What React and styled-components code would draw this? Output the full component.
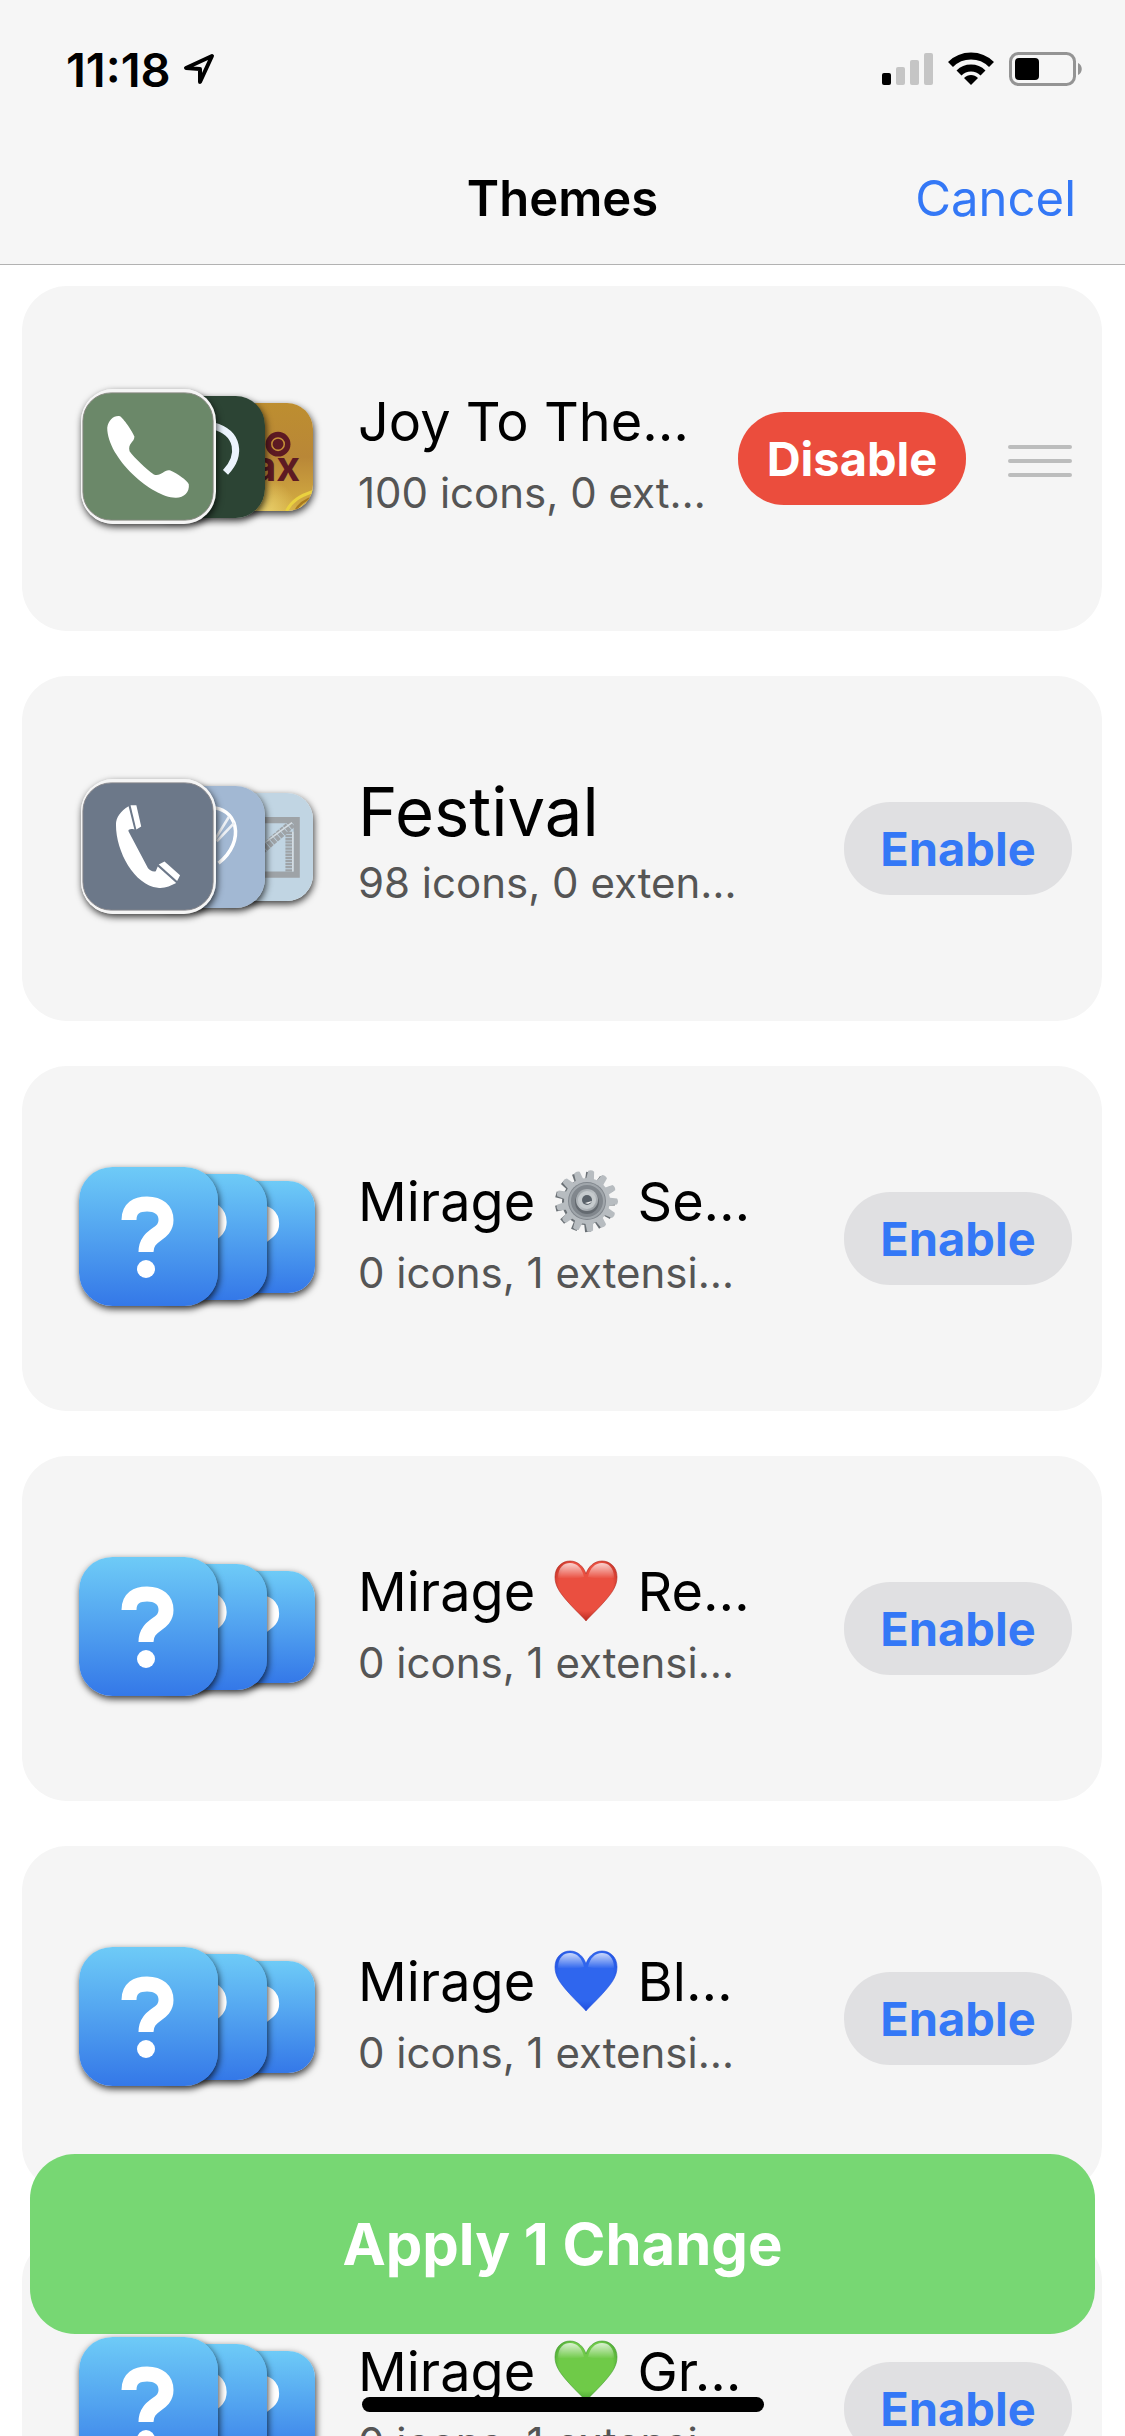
import React from 'react';
import styled, { createGlobalStyle } from 'styled-components';

const GlobalStyle = createGlobalStyle`
  * {
    box-sizing: border-box;
  }
  body {
    margin: 0;
    background-color: #fff;
    color: #000;
    font-family: Inter, 'Liberation Sans', sans-serif;
  }
  button {
    border: none;
    padding: 0;
    font-family: inherit;
    cursor: pointer;
  }
`;

const Screen = styled.div`
  display: flex;
  flex-direction: column;
  height: 100vh;
  overflow: hidden;
`;

const Header = styled.header`
  flex: none;
  background-color: #f6f6f6;
  border-bottom: 1px solid #b2b2b2;
`;

const StatusBar = styled.div`
  display: flex;
  align-items: center;
  justify-content: space-between;
  height: 132px;
  padding: 6px 42px 0 66px;
`;

const StatusGroup = styled.div`
  display: flex;
  align-items: center;
  gap: 12px;
`;

const Clock = styled.span`
  font-size: 47px;
  font-weight: 600;
`;

const NavBar = styled.nav`
  display: grid;
  grid-template-columns: 1fr auto 1fr;
  align-items: center;
  height: 132px;
  padding: 0 49px;
`;

const NavTitle = styled.h1`
  grid-column: 2;
  margin: 0;
  font-size: 49px;
  font-weight: 600;
`;

const CancelButton = styled.button`
  justify-self: end;
  background: none;
  color: #3478f6;
  font-size: 49px;
`;

const ThemeList = styled.ul`
  flex: 1;
  min-height: 0;
  overflow: hidden;
  display: flex;
  flex-direction: column;
  gap: 45px;
  margin: 0;
  padding: 21px 23px 0 22px;
  list-style: none;
`;

const ThemeCard = styled.li`
  flex: none;
  display: flex;
  align-items: center;
  height: 345px;
  padding: 0 30px 0 57px;
  border-radius: 45px;
  background-color: #f5f5f5;
`;

const IconStack = styled.div`
  flex: none;
  display: flex;
  align-items: center;
  width: 279px;
  padding-bottom: 4px;
`;

const AppIcon = styled.svg`
  position: relative;
  flex: none;
  width: ${(props) => props.$size - props.$inset * 2}px;
  height: ${(props) => props.$size - props.$inset * 2}px;
  margin: ${(props) => props.$inset}px;
  margin-right: ${(props) => (props.$overlap || 0) + props.$inset}px;
  z-index: ${(props) => props.$layer};
  border-radius: 24%;
  box-shadow: 1px 3px 7px rgba(0, 0, 0, 0.75);
`;

const ThemeInfo = styled.div`
  flex: 1;
  min-width: 0;
  padding-bottom: 8px;
  white-space: nowrap;
`;

const ThemeName = styled.h2`
  margin: 0;
  font-size: ${(props) => (props.$large ? 67 : 54)}px;
  font-weight: 400;
  line-height: 76px;
`;

const ThemeDetail = styled.p`
  margin: 0;
  color: #555;
  font-size: 42px;
  line-height: 66px;
`;

const Emoji = styled.svg`
  width: 64px;
  height: 64px;
  margin: 0 4px;
  vertical-align: -12px;
`;

const ToggleButton = styled.button`
  flex: none;
  width: 228px;
  height: 93px;
  border-radius: 46px;
  background-color: ${(props) => (props.$active ? '#eb4d3d' : '#e0e0e2')};
  color: ${(props) => (props.$active ? '#fff' : '#3478f6')};
  font-size: 47px;
  font-weight: 700;
`;

const DragHandle = styled.svg`
  flex: none;
  width: 66px;
  height: 34px;
  margin: 4px 0 0 40px;
`;

const Footer = styled.footer`
  position: fixed;
  right: 0;
  bottom: 24px;
  left: 0;
  display: flex;
  flex-direction: column;
  align-items: center;
  gap: 63px;
  padding: 0 30px;
`;

const ApplyButton = styled.button`
  width: 100%;
  height: 180px;
  border-radius: 45px;
  background-color: #77d773;
  color: #fff;
  font-size: 58px;
  font-weight: 700;
`;

const HomeIndicator = styled.div`
  width: 402px;
  height: 15px;
  border-radius: 8px;
  background-color: #000;
`;

const hearts = {
  red: ['#ea4f40', '#b3261c'],
  blue: ['#2f66ee', '#1d4bdc'],
  green: ['#6fca48', '#3f9a2c'],
};

const Heart = ({ color }) => {
  const [base, dark] = hearts[color];
  return (
    <Emoji viewBox="0 0 64 64" role="img" aria-label={`${color} heart`}>
      <defs>
        <radialGradient id={`heart-${color}`} cx="0.5" cy="0.4" r="0.62">
          <stop offset="0" stopColor={base} />
          <stop offset="0.7" stopColor={base} />
          <stop offset="1" stopColor={dark} />
        </radialGradient>
        <linearGradient id={`shine-${color}`} x1="0" y1="0" x2="0" y2="1">
          <stop offset="0" stopColor="#fff" stopOpacity="0.75" />
          <stop offset="1" stopColor="#fff" stopOpacity="0" />
        </linearGradient>
      </defs>
      <path
        d="M32 62C28 57 22 52 14 43C6 34 1 27 1 18C1 8 8 2 16 2C24 2 30 8 32 15C34 8 40 2 48 2C56 2 63 8 63 18C63 27 58 34 50 43C42 52 36 57 32 62Z"
        fill={`url(#heart-${color})`}
        stroke={dark}
        strokeOpacity="0.6"
      />
      <path d="M4 19C4 8 10 4 16 4C23 4 28 9 30 18C22 20 12 20 4 19Z" fill={`url(#shine-${color})`} />
      <path d="M60 19C60 8 54 4 48 4C41 4 36 9 34 18C42 20 52 20 60 19Z" fill={`url(#shine-${color})`} />
    </Emoji>
  );
};

const teeth = Array.from({ length: 13 }, (_, i) => (i * 360) / 13 + 8);

const Gear = () => (
  <Emoji viewBox="0 0 64 64" role="img" aria-label="gear">
    <defs>
      <linearGradient id="gear" x1="0" y1="0" x2="1" y2="1">
        <stop offset="0" stopColor="#9aa0a5" />
        <stop offset="0.5" stopColor="#bcc1c5" />
        <stop offset="1" stopColor="#8d9398" />
      </linearGradient>
    </defs>
    <g fill="#6a7075">
      <circle cx="31" cy="33" r="23" />
      {teeth.map((angle) => (
        <path key={angle} d="M28 12L28 3H34L34 12Z" transform={`rotate(${angle} 31 33)`} />
      ))}
    </g>
    <g fill="#b7bcc0">
      <circle cx="33" cy="32" r="23" />
      {teeth.map((angle) => (
        <path key={angle} d="M29 11L30 2Q33 0 36 2L37 11Z" transform={`rotate(${angle} 33 32)`} />
      ))}
    </g>
    <circle cx="33" cy="32" r="19" fill="#81878d" />
    <circle cx="33" cy="32" r="17" fill="none" stroke="#a0a6ab" strokeWidth="2" />
    <circle cx="33" cy="33" r="12" fill="#646a70" />
    <circle cx="33" cy="31" r="11" fill="url(#gear)" />
    <circle cx="33" cy="31" r="9" fill="#c5cacd" />
    <circle cx="33" cy="31" r="5" fill="#596169" />
    <path d="M31 34A5 5 0 0 0 38 32Z" fill="#f4f4f4" />
  </Emoji>
);

const QuestionArt = () => (
  <>
    <defs>
      <linearGradient id="sky" x1="0" y1="0" x2="0" y2="1">
        <stop offset="0" stopColor="#6ecbf7" />
        <stop offset="1" stopColor="#3478e8" />
      </linearGradient>
    </defs>
    <rect width="139" height="139" fill="url(#sky)" />
    <path
      d="M50 53C50 41 58 37 68 37C80 37 87 43 87 53C87 69 67 66 67 85"
      fill="none"
      stroke="#fff"
      strokeWidth="15"
    />
    <circle cx="67" cy="102" r="9" fill="#fff" />
  </>
);

const GreenPhoneArt = () => (
  <>
    <rect width="139" height="139" fill="#f5f5f5" />
    <rect x="2" y="4" width="134" height="131" rx="29" fill="#6b8869" stroke="#85877f" strokeWidth="1" />
    <path
      d="M27 40C28 32 34 27 40 28C43 29 54 45 55 49C55 55 48 56 50 64C55 71 67 82 75 88C82 91 86 82 92 84C99 87 109 94 111 98C112 106 106 112 98 112C75 113 27 72 27 40Z"
      fill="#fff"
    />
  </>
);

const SlatePhoneArt = () => (
  <>
    <rect width="139" height="139" fill="#f5f5f5" />
    <rect x="2" y="4" width="134" height="131" rx="29" fill="#6c7889" stroke="#85858a" strokeWidth="1" />
    <path
      d="M49 28C41 33 36 39 36 47C36 75 55 109 79 112C86 113 92 110 98 107L79 90L77 95C74 96 71 94 69 92L49 54C48 52 51 51 55 52Z"
      fill="#fff"
    />
    <path d="M51 27L57 27L62 49L57 52Z" fill="#fff" />
    <path d="M80 88L86 85L102 99L99 105Z" fill="#fff" />
  </>
);

const RingArt = () => (
  <>
    <rect width="139" height="139" fill="#2c4434" />
    <path d="M80 34C110 42 112 68 94 87" fill="none" stroke="#ecf4fd" strokeWidth="8" />
  </>
);

const CompassArt = () => (
  <>
    <rect width="139" height="139" fill="#a2b8d3" />
    <path d="M74 25C108 22 118 63 86 88" fill="none" stroke="#fff" strokeWidth="4" />
    <path d="M84 63L104 42M80 64L98 35" fill="none" stroke="#eef1f5" strokeWidth="3" />
  </>
);

const GoldArt = () => (
  <>
    <defs>
      <linearGradient id="gold" x1="0" y1="0" x2="0" y2="1">
        <stop offset="0" stopColor="#bd8e30" />
        <stop offset="0.5" stopColor="#b98737" />
        <stop offset="1" stopColor="#d5af43" />
      </linearGradient>
      <radialGradient id="gold-glow" cx="0.55" cy="1" r="0.3">
        <stop offset="0" stopColor="#e9cf6c" />
        <stop offset="1" stopColor="#e9cf6c" stopOpacity="0" />
      </radialGradient>
    </defs>
    <rect width="139" height="139" fill="url(#gold)" />
    <rect width="139" height="139" fill="url(#gold-glow)" />
    <path d="M105 139C112 125 122 120 139 114" fill="none" stroke="#ead13f" strokeWidth="4" />
    <path d="M116 139C122 128 130 124 139 121" fill="none" stroke="#a8791d" strokeWidth="3" />
    <circle cx="94" cy="53" r="16" fill="#5d1a23" />
    <circle cx="94" cy="53" r="8" fill="none" stroke="#c48f37" strokeWidth="2" />
    <text x="61" y="101" fill="#5d1a23" fontSize="53" fontWeight="700">
      ax
    </text>
  </>
);

const SketchArt = () => (
  <>
    <rect width="139" height="139" fill="#c1d5e3" />
    <g fill="none" stroke="#9ea3a7">
      <path d="M60 35H118V105H60" strokeWidth="8" />
      <path d="M72 74L116 36" strokeWidth="11" strokeDasharray="5 1" />
      <path d="M108 50V102" strokeWidth="9" strokeDasharray="3 1" />
    </g>
    <path d="M74 66L112 38M113 50V101" stroke="#d4dce2" strokeWidth="2" />
  </>
);

const defaultIcons = [QuestionArt, QuestionArt, QuestionArt];

const themes = [
  {
    id: 'joy',
    name: 'Joy To The…',
    detail: '100 icons, 0 ext…',
    icons: [GreenPhoneArt, RingArt, GoldArt],
    inset: 2,
    active: true,
  },
  {
    id: 'festival',
    name: 'Festival',
    detail: '98 icons, 0 exten…',
    icons: [SlatePhoneArt, CompassArt, SketchArt],
    inset: 2,
    large: true,
  },
  { id: 'settings', name: <>Mirage <Gear /> Se…</>, detail: '0 icons, 1 extensi…', icons: defaultIcons },
  { id: 'red', name: <>Mirage <Heart color="red" /> Re…</>, detail: '0 icons, 1 extensi…', icons: defaultIcons },
  { id: 'blue', name: <>Mirage <Heart color="blue" /> Bl…</>, detail: '0 icons, 1 extensi…', icons: defaultIcons },
  { id: 'green', name: <>Mirage <Heart color="green" /> Gr…</>, detail: '0 icons, 1 extensi…', icons: defaultIcons },
];

const ThemeRow = ({ theme }) => {
  const [Front, Middle, Back] = theme.icons;
  const inset = theme.inset || 0;

  return (
    <ThemeCard>
      <IconStack aria-hidden="true">
        <AppIcon viewBox="0 0 139 139" $size={139} $inset={inset} $overlap={-77} $layer={3}>
          <Front />
        </AppIcon>
        <AppIcon viewBox="0 0 139 139" $size={126} $inset={inset} $overlap={-64} $layer={2}>
          <Middle />
        </AppIcon>
        <AppIcon viewBox="0 0 139 139" $size={112} $inset={inset} $layer={1}>
          <Back />
        </AppIcon>
      </IconStack>
      <ThemeInfo>
        <ThemeName $large={theme.large}>{theme.name}</ThemeName>
        <ThemeDetail>{theme.detail}</ThemeDetail>
      </ThemeInfo>
      <ToggleButton type="button" $active={theme.active}>
        {theme.active ? 'Disable' : 'Enable'}
      </ToggleButton>
      {theme.active && (
        <DragHandle viewBox="0 0 66 34" stroke="#bcbdbd" strokeWidth="4" strokeLinecap="round" aria-hidden="true">
          <path d="M4 3H64M4 17H64M4 31H64" />
        </DragHandle>
      )}
    </ThemeCard>
  );
};

const StatusIcons = () => (
  <svg width="201" height="34" viewBox="0 0 201 34" aria-hidden="true">
    <rect x="0" y="21" width="9" height="12" rx="2" />
    <g fill="#c5c5c5">
      <rect x="14" y="15" width="9" height="18" rx="2" />
      <rect x="28" y="8" width="9" height="25" rx="2" />
      <rect x="42" y="1" width="9" height="32" rx="2" />
    </g>
    <g fill="none" stroke="#000" strokeWidth="7">
      <path d="M68.500 12.500A29 29 0 0 1 109.500 12.500" />
      <path d="M77 21A17 17 0 0 1 101 21" />
    </g>
    <path d="M82 26C86 22 92 22 96 26L89 33Z" />
    <rect x="128.500" y="1.500" width="64" height="31" rx="8" fill="none" stroke="#949494" strokeWidth="3" />
    <rect x="133" y="6" width="24" height="22" rx="4" />
    <path d="M196 11C201 13 201 21 196 23Z" fill="#949494" />
  </svg>
);

const LocationArrow = () => (
  <svg width="32" height="32" viewBox="0 0 32 32" fill="none" stroke="#000" strokeWidth="4" strokeLinejoin="round" aria-hidden="true">
    <path d="M29 3L3 15L17 16V29Z" />
  </svg>
);

const App = () => (
  <Screen>
    <GlobalStyle />
    <Header>
      <StatusBar>
        <StatusGroup>
          <Clock>11:18</Clock>
          <LocationArrow />
        </StatusGroup>
        <StatusIcons />
      </StatusBar>
      <NavBar>
        <NavTitle>Themes</NavTitle>
        <CancelButton type="button">Cancel</CancelButton>
      </NavBar>
    </Header>
    <ThemeList>
      {themes.map((theme) => (
        <ThemeRow key={theme.id} theme={theme} />
      ))}
    </ThemeList>
    <Footer>
      <ApplyButton type="button">Apply 1 Change</ApplyButton>
      <HomeIndicator />
    </Footer>
  </Screen>
);

export default App;
